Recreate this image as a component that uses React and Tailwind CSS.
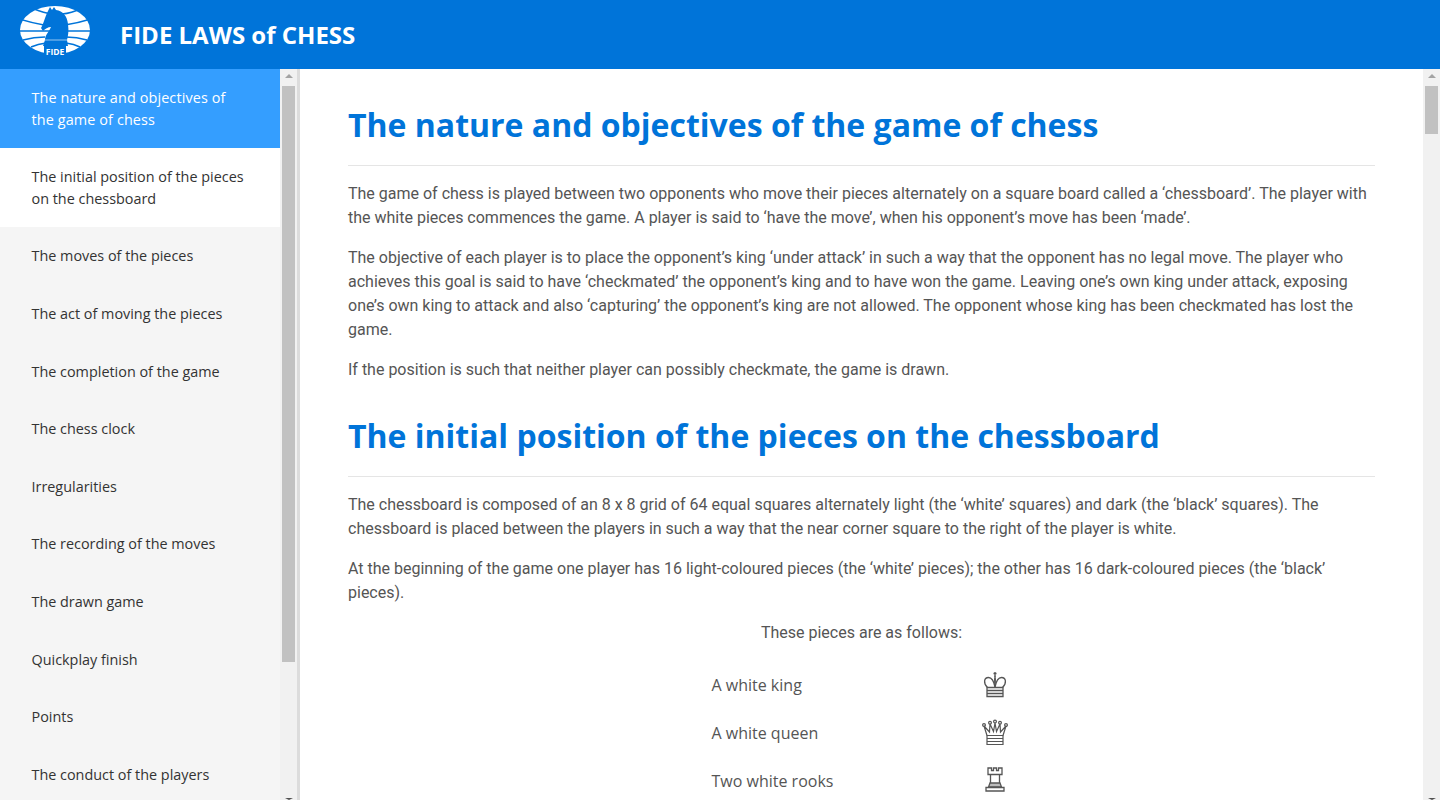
import React from "react";

const menu = [
  "The nature and objectives of the game of chess",
  "The initial position of the pieces on the chessboard",
  "The moves of the pieces",
  "The act of moving the pieces",
  "The completion of the game",
  "The chess clock",
  "Irregularities",
  "The recording of the moves",
  "The drawn game",
  "Quickplay finish",
  "Points",
  "The conduct of the players",
];

const Logo = () => (
  <svg width="72" height="58" viewBox="0 0 72 58" className="shrink-0">
    <ellipse cx="35" cy="29" rx="35" ry="24" fill="#fff" />
    <g stroke="#0074d9" strokeWidth="1.5" fill="none">
      <path d="M14 8 Q24 12 32 13" />
      <path d="M42 13 Q52 12 60 8" />
      <path d="M-1 18 Q12 22 24 24" />
      <path d="M45 24 Q58 22 71 18" />
      <path d="M-1 30 H71" />
      <path d="M3 39 Q14 36 25 36" />
      <path d="M46 36 Q57 36 67 39" />
      <path d="M11 46 Q18 43 26 42" />
      <path d="M46 42 Q54 43 60 46" />
    </g>
    <path
      d="M28 10 L30 6 L32 9 L34 6 L36 9 C43 10 47 15 48 23 C49 30 48 35 47 39 L48 45 L23 45 L25 39 C25 34 29 31 31 26 C28 26 25 28 23 30 L21 27 C23 24 25 16 28 10 Z"
      fill="#0074d9"
    />
    <path d="M25 39 H47" stroke="#fff" strokeWidth="0.6" />
    <rect x="24" y="45" width="22" height="11" fill="#0074d9" />
    <text x="35" y="54" textAnchor="middle" fill="#fff" fontSize="8.5" fontWeight="700" fontFamily="'Open Sans', sans-serif">FIDE</text>
  </svg>
);

const PieceBase = () => (
  <>
    <path d="M5 16.5 H21 V25.5 H5 Z" />
    <path d="M5 19.5 H21 M5 22.5 H21" />
  </>
);

const King = () => (
  <svg width="26" height="28" viewBox="0 0 26 28" fill="none" stroke="#555" strokeWidth="1.3">
    <PieceBase />
    <path d="M13 1 V6 M11.5 2.5 H14.5" />
    <path d="M13 16 C13 12 12 9 13 6 C14 9 13 12 13 16" />
    <path d="M5.5 16.5 C1 12 2 6.5 6.5 6.5 C10 6.5 12 11 13 16 C14 11 16 6.5 19.5 6.5 C24 6.5 25 12 20.5 16.5" />
  </svg>
);

const Queen = () => (
  <svg width="26" height="28" viewBox="0 0 26 28" fill="none" stroke="#555" strokeWidth="1.2">
    <PieceBase />
    <path d="M5 16.5 L2 7 L7.5 13 L8 5 L11.5 12.5 L13 4 L14.5 12.5 L18 5 L18.5 13 L24 7 L21 16.5" />
    <circle cx="2" cy="6" r="1.4" />
    <circle cx="8" cy="3.8" r="1.4" />
    <circle cx="13" cy="2.6" r="1.4" />
    <circle cx="18" cy="3.8" r="1.4" />
    <circle cx="24" cy="6" r="1.4" />
  </svg>
);

const Rook = () => (
  <svg width="26" height="28" viewBox="0 0 26 28" fill="none" stroke="#555" strokeWidth="1.3">
    <path d="M6 1 H9.5 V3.5 H11.5 V1 H14.5 V3.5 H16.5 V1 H20 V7.5 H6 Z" />
    <path d="M8.5 7.5 V16 M17.5 7.5 V16" />
    <path d="M8 16 H18 L19.5 20 H6.5 Z" fill="#bbb" />
    <path d="M4 20.5 H22 V24 H4 Z" />
  </svg>
);

const pieces = [
  ["A white king", <King key="k" />],
  ["A white queen", <Queen key="q" />],
  ["Two white rooks", <Rook key="r" />],
];

const Scrollbar = ({ thumbH, thumbTop }) => (
  <div className="relative shrink-0 w-[17px] bg-[#f1f1f1]">
    <div className="absolute left-1/2 top-[5px] -translate-x-1/2 w-0 h-0 border-x-[4px] border-x-transparent border-b-[4px] border-b-[#a3a3a3]" />
    <div
      className="absolute left-[2px] right-[2px] bg-[#c1c1c1]"
      style={{ top: thumbTop, height: thumbH }}
    />
    <div className="absolute left-1/2 bottom-0 -translate-x-1/2 w-0 h-0 border-x-[4px] border-x-transparent border-t-[2px] border-t-[#505050]" />
  </div>
);

const H1 = ({ children }) => (
  <h1 className="font-['Open_Sans',sans-serif] font-bold text-[32px] leading-[39px] text-[#0074d9] pb-[21px] border-b border-[#e5e5e5] mb-[16px]">
    {children}
  </h1>
);

const P = ({ children }) => <p className="mb-[16px]">{children}</p>;

export default function App() {
  return (
    <div className="h-screen flex flex-col overflow-hidden bg-white font-['Roboto',sans-serif]">
      <header className="h-[69px] shrink-0 bg-[#0074d9] flex items-center pl-[20px] pb-[10px]">
        <Logo />
        <div className="ml-[28px] mt-[10px] text-white font-['Open_Sans',sans-serif] font-bold text-[24px]">
          FIDE LAWS of CHESS
        </div>
      </header>

      <div className="flex flex-1 min-h-0">
        <aside className="w-[280px] shrink-0 bg-[#f5f5f5] overflow-hidden font-['Open_Sans',sans-serif] text-[14.4px] leading-[21.6px]">
          {menu.map((item, i) => (
            <div
              key={item}
              className={
                "pl-[31.5px] pr-[35px] py-[18px] " +
                (i === 0 ? "bg-[#349eff] text-white font-medium tracking-[0.12px]" : i === 1 ? "bg-white text-[#333]" : "text-[#333]")
              }
            >
              {item}
            </div>
          ))}
        </aside>
        <Scrollbar thumbTop={17} thumbH={576} />
        <div className="w-[3px] shrink-0 bg-[#dcdcdc]" />

        <main className="flex-1 min-w-0 overflow-hidden pt-[36px] px-[48px] text-[16px] leading-[24px] text-[#555]">
          <H1>The nature and objectives of the game of chess</H1>
          <P>
            The game of chess is played between two opponents who move their pieces alternately on a square board called a ‘chessboard’. The player with the white pieces commences the game. A player is said to ‘have the move’, when his opponent’s move has been ‘made’.
          </P>
          <P>
            The objective of each player is to place the opponent’s king ‘under attack’ in such a way that the opponent has no legal move. The player who achieves this goal is said to have ‘checkmated’ the opponent’s king and to have won the game. Leaving one’s own king under attack, exposing one’s own king to attack and also ‘capturing’ the opponent’s king are not allowed. The opponent whose king has been checkmated has lost the game.
          </P>
          <P>If the position is such that neither player can possibly checkmate, the game is drawn.</P>

          <div className="pt-[18px]">
            <H1>The initial position of the pieces on the chessboard</H1>
          </div>
          <P>
            The chessboard is composed of an 8 x 8 grid of 64 equal squares alternately light (the ‘white’ squares) and dark (the ‘black’ squares). The chessboard is placed between the players in such a way that the near corner square to the right of the player is white.
          </P>
          <P>
            At the beginning of the game one player has 16 light-coloured pieces (the ‘white’ pieces); the other has 16 dark-coloured pieces (the ‘black’ pieces).
          </P>
          <p className="text-center">These pieces are as follows:</p>

          <div className="mt-[16px] ml-[363.5px] font-['Open_Sans',sans-serif]">
            {pieces.map(([name, icon]) => (
              <div key={name} className="h-[48px] flex items-center">
                <span className="w-[270.5px]">{name}</span>
                {icon}
              </div>
            ))}
          </div>
        </main>
        <Scrollbar thumbTop={17} thumbH={48} />
      </div>
    </div>
  );
}
